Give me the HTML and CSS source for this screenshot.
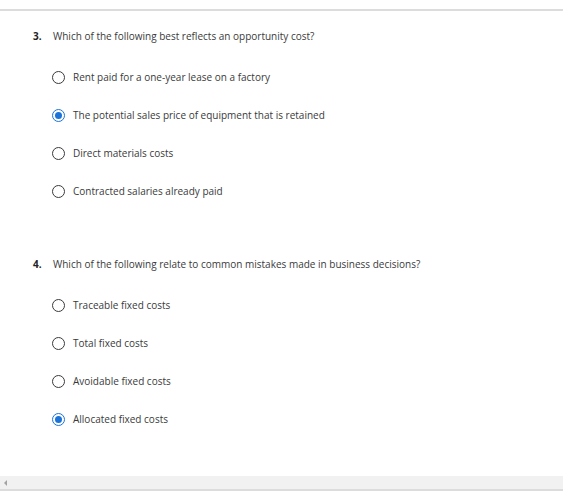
FILE: index.html
```html
<!DOCTYPE html>
<html>
<head>
<meta charset="utf-8">
<link rel="stylesheet" href="styles.css">
</head>
<body>
<div class="page">
  <div class="topline"></div>
  <div class="content">
    <div class="question">
      <div class="qhead"><span class="num">3.</span><span class="qtext">Which of the following best reflects an opportunity cost?</span></div>
      <div class="options">
        <div class="opt"><span class="radio"></span><span class="label">Rent paid for a one-year lease on a factory</span></div>
        <div class="opt"><span class="radio checked"></span><span class="label">The potential sales price of equipment that is retained</span></div>
        <div class="opt"><span class="radio"></span><span class="label">Direct materials costs</span></div>
        <div class="opt"><span class="radio"></span><span class="label">Contracted salaries already paid</span></div>
      </div>
    </div>
    <div class="question q2">
      <div class="qhead"><span class="num">4.</span><span class="qtext">Which of the following relate to common mistakes made in business decisions?</span></div>
      <div class="options">
        <div class="opt"><span class="radio"></span><span class="label">Traceable fixed costs</span></div>
        <div class="opt"><span class="radio"></span><span class="label">Total fixed costs</span></div>
        <div class="opt"><span class="radio"></span><span class="label">Avoidable fixed costs</span></div>
        <div class="opt"><span class="radio checked"></span><span class="label">Allocated fixed costs</span></div>
      </div>
    </div>
  </div>
  <div class="scrollbar"><span class="arrow"></span></div>
</div>
</body>
</html>
```
FILE: styles.css
```css
html, body { margin: 0; padding: 0; background: #fff; }
body { font-family: "Open Sans", "DejaVu Sans", sans-serif; font-size: 10px; color: #3a3a3a; }
.page { width: 563px; height: 492px; display: flex; flex-direction: column; overflow: hidden; }
.topline { margin-top: 9px; height: 2px; background: #dcdcdc; }
.content { flex: 1; padding: 17px 0 0 33px; }
.qhead { display: flex; align-items: center; height: 16px; }
.num { font-weight: 700; color: #222; width: 20px; }
.qtext { color: #3a3a3a; }
.options { display: flex; flex-direction: column; gap: 22px; padding: 25px 0 0 19px; }
.opt { display: flex; align-items: center; height: 16px; }
.radio { width: 11px; height: 11px; border: 1.5px solid #3a3a3a; border-radius: 50%; margin-right: 8px; box-sizing: content-box; position: relative; }
.radio.checked { border-color: #1a73d9; }
.radio.checked::after { content: ""; position: absolute; left: 2px; top: 2px; width: 7px; height: 7px; border-radius: 50%; background: #1a73d9; }
.q2 { margin-top: 57px; }
.scrollbar { height: 13px; background: #f1f1f1; border-bottom: 2px solid #dcdcdc; display: flex; align-items: center; padding-left: 4px; margin-bottom: 1px; }
.arrow { width: 0; height: 0; border-top: 3px solid transparent; border-bottom: 3px solid transparent; border-right: 3px solid #a3a3a3; }
```
